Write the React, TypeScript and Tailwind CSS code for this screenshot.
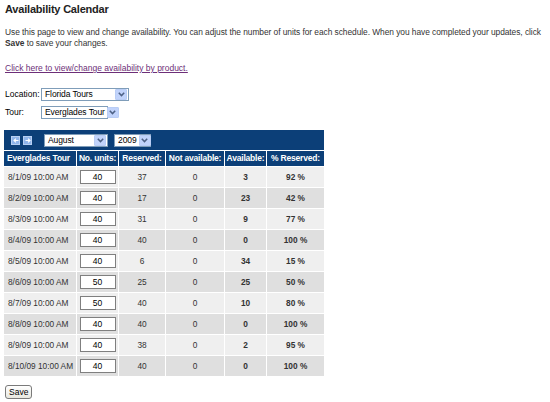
import React from 'react';

const ROWS = [
  { d: '8/1/09 10:00 AM', u: 40, r: 37, n: 0, a: 3, p: 92 },
  { d: '8/2/09 10:00 AM', u: 40, r: 17, n: 0, a: 23, p: 42 },
  { d: '8/3/09 10:00 AM', u: 40, r: 31, n: 0, a: 9, p: 77 },
  { d: '8/4/09 10:00 AM', u: 40, r: 40, n: 0, a: 0, p: 100 },
  { d: '8/5/09 10:00 AM', u: 40, r: 6, n: 0, a: 34, p: 15 },
  { d: '8/6/09 10:00 AM', u: 50, r: 25, n: 0, a: 25, p: 50 },
  { d: '8/7/09 10:00 AM', u: 50, r: 40, n: 0, a: 10, p: 80 },
  { d: '8/8/09 10:00 AM', u: 40, r: 40, n: 0, a: 0, p: 100 },
  { d: '8/9/09 10:00 AM', u: 40, r: 38, n: 0, a: 2, p: 95 },
  { d: '8/10/09 10:00 AM', u: 40, r: 40, n: 0, a: 0, p: 100 },
];

function DropButton() {
  return (
    <span className="flex items-center justify-center shrink-0 w-[12px] h-[11px] bg-[#c1d3fb] border border-[#b9cdf5] rounded-[1px] mr-px">
      <svg width="7" height="5" viewBox="0 0 7 5">
        <path d="M0.8 0.8 L3.5 3.6 L6.2 0.8" stroke="#4d6185" strokeWidth="1.5" fill="none" />
      </svg>
    </span>
  );
}

function Select({ value, w }: { value: string; w: string }) {
  return (
    <div className={`flex items-center justify-between gap-[2px] h-[13px] bg-white border border-[#7f9db9] ${w}`}>
      <span className="pl-[3px] text-[8.5px] text-black leading-none whitespace-nowrap tracking-[-0.1px]">{value}</span>
      <DropButton />
    </div>
  );
}

function NavArrow({ dir }: { dir: 'l' | 'r' }) {
  return (
    <span className="flex items-center justify-center w-[9px] h-[9px] bg-[#8fb4ea] border border-[#b7cff2]">
      <svg width="6" height="5" viewBox="0 0 6 5">
        {dir === 'l' ? (
          <path d="M5.5 2.5 H1 M3 0.6 L1 2.5 L3 4.4" stroke="white" strokeWidth="1.1" fill="none" />
        ) : (
          <path d="M0.5 2.5 H5 M3 0.6 L5 2.5 L3 4.4" stroke="white" strokeWidth="1.1" fill="none" />
        )}
      </svg>
    </span>
  );
}

export default function App() {
  return (
    <div className="w-[550px] h-[402px] bg-white px-[5px] text-[#333] overflow-hidden" style={{ fontFamily: '"Liberation Sans", Arial, sans-serif' }}>
      <h1 className="pt-[3px] text-[11px] font-bold text-[#222] leading-[13px] tracking-[-0.2px]">Availability Calendar</h1>

      <p className="mt-[11px] w-[545px] text-[8.4px] leading-[11px] text-[#333] tracking-[-0.05px]">
        Use this page to view and change availability. You can adjust the number of units for each schedule. When you have completed your updates, click <b>Save</b> to save your changes.
      </p>

      <a className="block mt-[13px] text-[8.5px] leading-[12px] text-[#6d2f78] underline">Click here to view/change availability by product.</a>

      {/* filters */}
      <div className="mt-[14px] flex flex-col gap-[5px] text-[8.5px] text-black">
        <div className="flex items-center">
          <span className="w-[36px]">Location:</span>
          <Select value="Florida Tours" w="w-[88px]" />
        </div>
        <div className="flex items-center">
          <span className="w-[36px]">Tour:</span>
          <Select value="Everglades Tour" w="w-[67px]" />
        </div>
      </div>

      {/* calendar grid */}
      <div className="mt-[11px] -ml-px w-[320px] grid grid-cols-[72px_41px_46px_58px_41px_57px] gap-px bg-white">
        <div className="col-span-6 h-[20px] bg-[#0c3f78] flex items-center pl-[7px] gap-[3px]">
          <NavArrow dir="l" />
          <NavArrow dir="r" />
          <div className="ml-[9px]">
            <Select value="August" w="w-[64px]" />
          </div>
          <div className="ml-[3px]">
            <Select value="2009" w="w-[37px]" />
          </div>
        </div>

        {['Everglades Tour', 'No. units:', 'Reserved:', 'Not available:', 'Available:', '% Reserved:'].map((h, i) => (
          <div key={h} className={`h-[15px] bg-[#0c3f78] text-white font-bold text-[8.5px] flex items-center tracking-[-0.2px] whitespace-nowrap ${i === 0 ? 'pl-[3px]' : 'justify-center'}`}>
            {h}
          </div>
        ))}

        {ROWS.map((r, i) => {
          const bg = i % 2 === 0 ? 'bg-[#efefef]' : 'bg-[#dfdfdf]';
          const cell = `h-[20px] ${bg} flex items-center justify-center text-[8.3px] text-[#333]`;
          return (
            <React.Fragment key={r.d}>
              <div className={`h-[20px] ${bg} flex items-center pl-[4px] text-[8.3px] text-[#333] whitespace-nowrap`}>{r.d}</div>
              <div className={cell}>
                <div className="w-[36px] h-[14px] bg-white border border-[#7f7f7f] flex items-center justify-center text-black text-[8.5px]">{r.u}</div>
              </div>
              <div className={cell}>{r.r}</div>
              <div className={cell}>{r.n}</div>
              <div className={`${cell} font-bold`}>{r.a}</div>
              <div className={`${cell} font-bold`}>{r.p} %</div>
            </React.Fragment>
          );
        })}
      </div>

      <button className="mt-[9px] h-[14px] px-[3px] border border-[#7a7a7a] rounded-[3px] bg-gradient-to-b from-white to-[#e8e8e0] text-[8.5px] text-black leading-none">
        Save
      </button>
    </div>
  );
}
